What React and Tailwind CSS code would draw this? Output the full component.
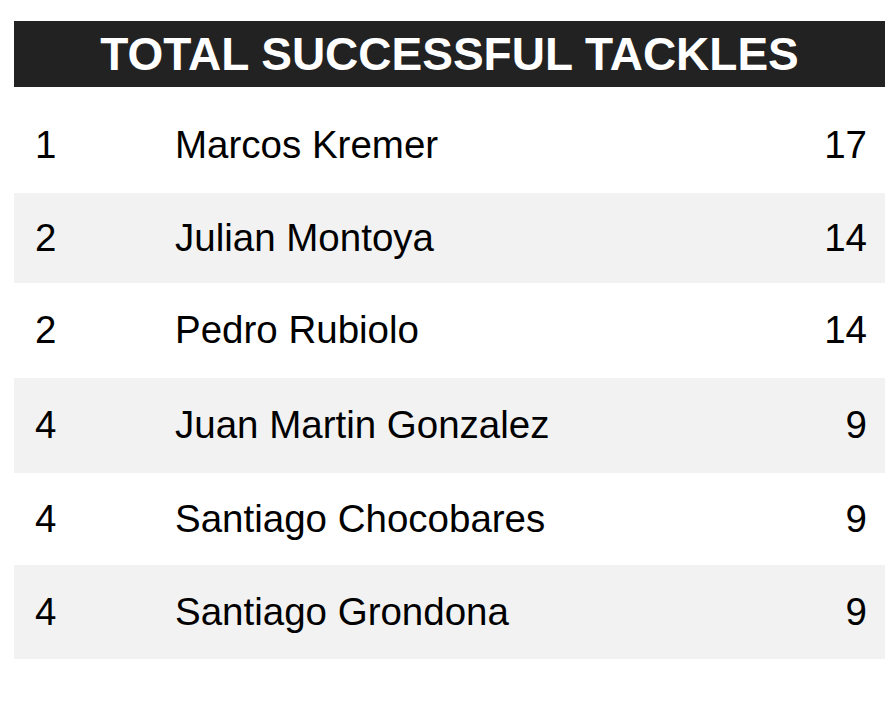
import React from "react";

const rows = [
  { rank: "1", name: "Marcos Kremer", value: "17", cls: "h-[95px] bg-white" },
  { rank: "2", name: "Julian Montoya", value: "14", cls: "h-[90px] bg-[#f2f2f2]" },
  { rank: "2", name: "Pedro Rubiolo", value: "14", cls: "h-[95px] bg-white" },
  { rank: "4", name: "Juan Martin Gonzalez", value: "9", cls: "h-[95px] bg-[#f2f2f2]" },
  { rank: "4", name: "Santiago Chocobares", value: "9", cls: "h-[92px] bg-white" },
  { rank: "4", name: "Santiago Grondona", value: "9", cls: "h-[94px] bg-[#f2f2f2]" },
];

export default function App() {
  return (
    <div
      className="w-[893px] h-[701px] bg-white text-black"
      style={{ fontFamily: '"Liberation Sans", Arial, sans-serif' }}
    >
      <div className="ml-[14px] w-[871px] pt-[21px]">
        <div className="h-[66px] bg-[#222222] flex items-center justify-center">
          <span className="text-white font-bold text-[46px] leading-none">
            TOTAL SUCCESSFUL TACKLES
          </span>
        </div>
        <div className="mt-[11px] flex flex-col">
          {rows.map((r, i) => (
            <div key={i} className={`flex items-center ${r.cls}`}>
              <div className="w-[146px] h-full flex items-center pl-[21px] text-[38.5px] leading-none">
                {r.rank}
              </div>
              <div className="flex-1 h-full flex items-center pl-[15px] text-[38.5px] leading-none">
                {r.name}
              </div>
              <div className="w-[157px] h-full flex items-center justify-end pr-[18px] text-[38.5px] leading-none">
                {r.value}
              </div>
            </div>
          ))}
        </div>
      </div>
    </div>
  );
}
